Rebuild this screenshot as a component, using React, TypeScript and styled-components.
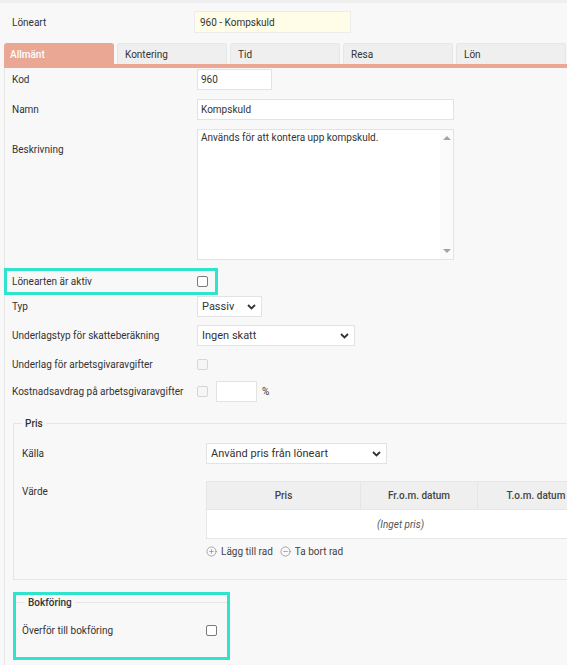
import styled, { createGlobalStyle } from 'styled-components'
import { CirclePlus, CircleMinus } from 'lucide-react'

const GlobalStyle = createGlobalStyle`
	html, body {
		margin: 0;
		padding: 0;
		background: #f8f8f8;
		overflow: hidden;
	}
	body {
		font-family: Roboto, "Liberation Sans", Arial, sans-serif;
		font-size: 10px;
		color: #333;
	}
`

const tabs = ['Allmänt', 'Kontering', 'Tid', 'Resa', 'Lön']

export default function App () {
	return <Page>
		<GlobalStyle />
		<TopRow>
			<TopLabel>Löneart</TopLabel>
			<TitleInput readOnly value={'960 - Kompskuld'} />
		</TopRow>

		<TabBar>
			{tabs.map((t, i) => <Tab key={t} $active={i === 0}>{t}</Tab>)}
		</TabBar>

		<Panel>
			<Rows>
				<Row>
					<Label>Kod</Label>
					<Input readOnly value={'960'} $width={75} />
				</Row>
				<Row $gap={9}>
					<Label>Namn</Label>
					<Input readOnly value={'Kompskuld'} $width={257} />
				</Row>
				<Row $top $gap={9}>
					<Label $pad={15}>Beskrivning</Label>
					<TextBox>
						<TextArea readOnly value={'Används för att kontera upp kompskuld.'} />
						<ScrollBar>
							<Arrow $up />
							<Arrow />
						</ScrollBar>
					</TextBox>
				</Row>
				<MarkedRow>
					<Label>Lönearten är aktiv</Label>
					<Check />
				</MarkedRow>
				<Row $gap={1}>
					<Label>Typ</Label>
					<Select $width={65}>Passiv<Chevron /></Select>
				</Row>
				<Row>
					<Label>Underlagstyp för skatteberäkning</Label>
					<Select $width={158}>Ingen skatt<Chevron /></Select>
				</Row>
				<Row>
					<Label>Underlag för arbetsgivaravgifter</Label>
					<Check $disabled />
				</Row>
				<Row $gap={6}>
					<Label>Kostnadsavdrag på arbetsgivaravgifter</Label>
					<Inline>
						<Check $disabled />
						<Input readOnly value={''} $width={41} />
						<Unit>%</Unit>
					</Inline>
				</Row>
			</Rows>

			<Fieldset>
				<Legend>Pris</Legend>
				<FieldRows>
					<Row $label={184}>
						<Label>Källa</Label>
						<Select $width={181}>Använd pris från löneart<Chevron /></Select>
					</Row>
					<Row $label={184} $top $gap={17}>
						<Label $pad={5}>Värde</Label>
						<div>
							<Table>
								<colgroup>
									<col style={{width: 154}} />
									<col style={{width: 117}} />
									<col style={{width: 117}} />
								</colgroup>
								<thead>
									<tr>
										<Th>Pris</Th>
										<Th>Fr.o.m. datum</Th>
										<Th>T.o.m. datum</Th>
									</tr>
								</thead>
								<tbody>
									<tr>
										<Empty colSpan={3}>(Inget pris)</Empty>
									</tr>
								</tbody>
							</Table>
							<Actions>
								<Action><CirclePlus size={11} strokeWidth={1.3} />Lägg till rad</Action>
								<Action><CircleMinus size={11} strokeWidth={1.3} />Ta bort rad</Action>
							</Actions>
						</div>
					</Row>
				</FieldRows>
			</Fieldset>

			<Marked>
				<SmallFieldset>
					<Legend>Bokföring</Legend>
					<Row $label={184}>
						<Label>Överför till bokföring</Label>
						<Check />
					</Row>
				</SmallFieldset>
			</Marked>
		</Panel>
	</Page>
}

const Page = styled.div`
	width: 640px;
	border-top: 3px solid #efefef;
`

const TopRow = styled.div`
	display: flex;
	align-items: center;
	padding: 8px 0 0 12px;
	height: 22px;
`

const TopLabel = styled.div`
	width: 182px;
`

const TitleInput = styled.input`
	box-sizing: border-box;
	width: 157px;
	height: 22px;
	border: 1px solid #ececec;
	background: #fffde7;
	font: inherit;
	color: #333;
	padding: 0 5px;
	outline: none;
`

const TabBar = styled.div`
	display: flex;
	gap: 3px;
	margin: 10px 0 0 4px;
	border-bottom: 4px solid #e9a794;
`

const Tab = styled.div<{$active: boolean}>`
	box-sizing: border-box;
	width: 110px;
	height: 21px;
	display: flex;
	align-items: center;
	padding-left: ${p => p.$active ? '5px' : '7px'};
	border-radius: 3px 3px 0 0;
	background: ${p => p.$active ? '#e9a794' : '#efefef'};
	border: 1px solid ${p => p.$active ? '#e9a794' : '#e6e6e6'};
	border-bottom: none;
	color: ${p => p.$active ? '#ffffff' : '#333'};
	font-weight: ${p => p.$active ? 500 : 400};
`

const Panel = styled.div`
	margin-left: 4px;
	border-left: 1px solid #e6e6e6;
	padding-bottom: 20px;
`

const Rows = styled.div`
	display: flex;
	flex-direction: column;
	padding: 1px 0 0 7px;
`

const Row = styled.div<{$label?: number, $top?: boolean, $gap?: number}>`
	display: grid;
	grid-template-columns: ${p => p.$label ?? 185}px auto;
	align-items: ${p => p.$top ? 'start' : 'center'};
	min-height: 21px;
	justify-items: start;
	margin-top: ${p => p.$gap ?? 8}px;

	&:first-child {
		margin-top: 0;
	}
`

const MarkedRow = styled(Row)`
	box-sizing: border-box;
	width: 214px;
	height: 27px;
	margin: 8px 0 0 -8px;
	padding-left: 5px;
	border: 3px solid #2fe3cc;
`

const Label = styled.div<{$pad?: number}>`
	padding-top: ${p => p.$pad ?? 0}px;
`

const Input = styled.input<{$width: number}>`
	box-sizing: border-box;
	width: ${p => p.$width}px;
	height: 21px;
	border: 1px solid #e3e3e3;
	background: #ffffff;
	font: inherit;
	color: #333;
	padding: 0 3px;
	outline: none;
`

const TextBox = styled.div`
	box-sizing: border-box;
	display: flex;
	width: 257px;
	height: 131px;
	border: 1px solid #e3e3e3;
	background: #ffffff;
`

const TextArea = styled.textarea`
	flex: 1;
	border: none;
	resize: none;
	font: inherit;
	color: #333;
	padding: 2px 3px;
	outline: none;
	overflow: hidden;
`

const ScrollBar = styled.div`
	width: 13px;
	display: flex;
	flex-direction: column;
	justify-content: space-between;
	align-items: center;
	padding: 6px 0;
	background: #fbfbfb;
`

const Arrow = styled.div<{$up?: boolean}>`
	width: 0;
	height: 0;
	border-left: 4px solid transparent;
	border-right: 4px solid transparent;
	${p => p.$up ? 'border-bottom: 4px solid #a3a3a3;' : 'border-top: 4px solid #a3a3a3;'}
`

const Select = styled.div<{$width: number}>`
	box-sizing: border-box;
	width: ${p => p.$width}px;
	height: 21px;
	display: flex;
	align-items: center;
	justify-content: space-between;
	padding: 0 5px 0 4px;
	border: 1px solid #e3e3e3;
	background: #ffffff;
	font-size: 11px;
`

const Chevron = () => <svg width="9" height="6" viewBox="0 0 9 6">
	<path d="M1 1l3.5 3.5L8 1" fill="none" stroke="#333" strokeWidth="1.8" />
</svg>

const Check = styled.span<{$disabled?: boolean}>`
	box-sizing: border-box;
	display: inline-block;
	width: 11px;
	height: 11px;
	border-radius: 2px;
	border: 1px solid ${p => p.$disabled ? '#d6d6d6' : '#7a7a7a'};
	background: ${p => p.$disabled ? '#f6f6f6' : '#ffffff'};
`

const Inline = styled.div`
	display: flex;
	align-items: center;
	gap: 8px;
`

const Unit = styled.span`
	margin-left: -3px;
`

const Fieldset = styled.fieldset`
	margin: 16px 0 0 8px;
	padding: 14px 0 22px 8px;
	border: 1px solid #e6e6e6;
	border-right: none;
`

const Legend = styled.legend`
	padding: 0 3px;
	margin-left: 0;
	font-weight: 500;
	color: #333;
`

const FieldRows = styled.div`
	display: flex;
	flex-direction: column;
`

const Table = styled.table`
	width: 388px;
	table-layout: fixed;
	border-collapse: collapse;
	background: #ffffff;
	border: 1px solid #e6e6e6;
`

const Th = styled.th`
	height: 27px;
	padding: 0;
	background: #efefef;
	border: 1px solid #e6e6e6;
	border-top: none;
	font-weight: 500;
	color: #444;
	white-space: nowrap;
`

const Empty = styled.td`
	height: 26px;
	text-align: left;
	padding-left: 170px;
	font-style: italic;
	color: #555;
`

const Actions = styled.div`
	display: flex;
	gap: 7px;
	margin-top: 7px;
`

const Action = styled.span`
	display: flex;
	align-items: center;
	gap: 4px;
	color: #444;

	svg {
		color: #777;
	}
`

const Marked = styled.div`
	box-sizing: border-box;
	width: 217px;
	margin: 12px 0 0 8px;
	padding-top: 2px;
	border: 3px solid #2fe3cc;
`

const SmallFieldset = styled.fieldset`
	margin: 0;
	padding: 4px 0 16px 6px;
	border: none;
	border-top: 1px solid #e6e6e6;

	${Legend} {
		margin-left: 3px;
	}
`
